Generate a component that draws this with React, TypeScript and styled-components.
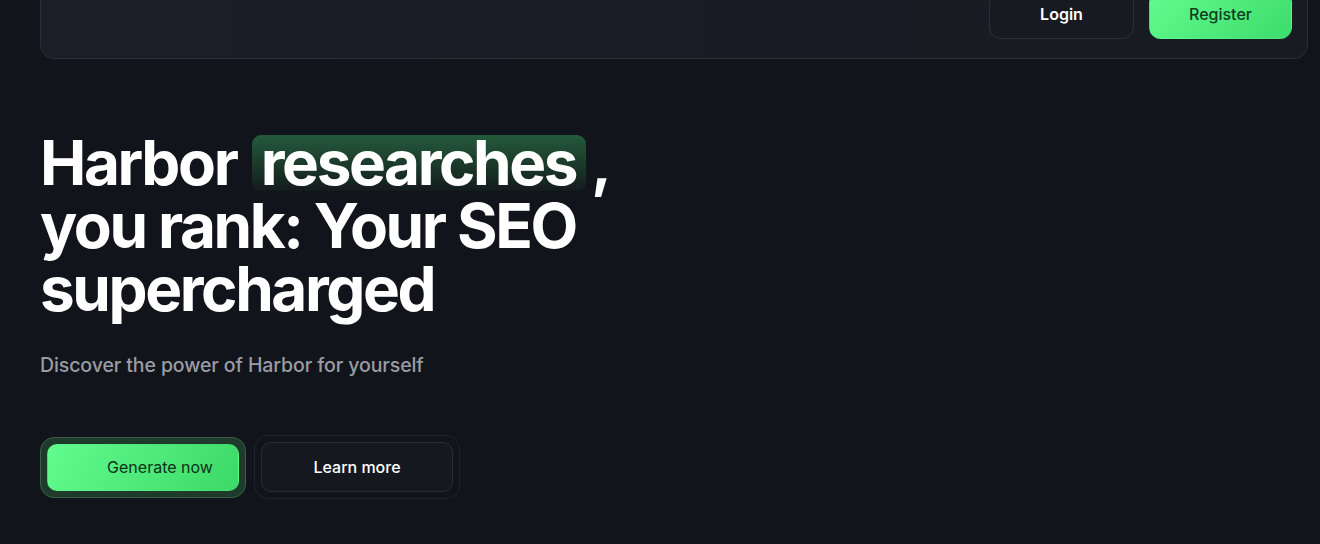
import styled, { createGlobalStyle } from "styled-components";

const GlobalStyle = createGlobalStyle`
html, body {
  margin: 0;
  padding: 0;
  background: #12141b;
  overflow: hidden;
}
body {
  font-family: Inter, "DejaVu Sans", sans-serif;
  color: #fff;
}
`;

const Page = styled.div`
width: 1320px;
height: 544px;
padding: 0 12px 0 40px;
box-sizing: border-box;
background: #12141b;
`;

const NavCard = styled.header`
margin-top: -29px;
height: 88px;
box-sizing: border-box;
display: flex;
justify-content: flex-end;
align-items: flex-end;
gap: 15px;
padding: 0 15px 19px 0;
background: linear-gradient(90deg, #1b1e26, #181b22);
border: 1px solid #2b2e36;
border-radius: 14px;
`;

const NavButton = styled.button<{ $primary?: boolean }>`
width: ${(p) => (p.$primary ? "143px" : "145px")};
height: 48px;
border-radius: 12px;
font-family: Inter, sans-serif;
font-size: 16px;
font-weight: ${(p) => (p.$primary ? 500 : 600)};
color: ${(p) => (p.$primary ? "#0f3d1f" : "#ffffff")};
background: ${(p) =>
  p.$primary ? "linear-gradient(135deg, #62fb8f, #3ddc6b)" : "#171a21"};
border: 1px solid ${(p) => (p.$primary ? "transparent" : "#2d3038")};
padding: 0 0 2px;
`;

const Hero = styled.section`
padding-top: 72px;
`;

const Heading = styled.h1`
margin: 0;
font-size: 62px;
line-height: 63px;
font-weight: 700;
letter-spacing: -2.4px;
color: #ffffff;
`;

const Highlight = styled.span`
display: inline-block;
line-height: 56px;
padding: 0 10px 0 9px;
margin: 0 5px 0 3px;
border-radius: 9px;
background: linear-gradient(180deg, #245a3b 0%, #1a3528 60%, #141b1d 100%);
`;

const Subtitle = styled.p`
margin: 33px 0 0;
font-size: 19.5px;
font-weight: 500;
color: #9a9ca4;
letter-spacing: -0.1px;
`;

const Actions = styled.div`
margin-top: 58px;
display: flex;
gap: 8px;
align-items: center;
`;

const ButtonFrame = styled.div<{ $green?: boolean }>`
padding: 6px;
border-radius: 14px;
border: 1px solid ${(p) => (p.$green ? "#3b5f47" : "#1f2229")};
background: ${(p) => (p.$green ? "#1e3a2a" : "transparent")};
`;

const ActionButton = styled.button<{ $green?: boolean }>`
display: block;
width: 192px;
height: ${(p) => (p.$green ? "47px" : "50px")};
border-radius: 10px;
font-family: Inter, sans-serif;
font-size: 16px;
font-weight: ${(p) => (p.$green ? 400 : 500)};
color: ${(p) => (p.$green ? "#0e3219" : "#ffffff")};
background: ${(p) =>
  p.$green ? "linear-gradient(120deg, #62fb8e, #3bd967)" : "#16181f"};
border: 1px solid ${(p) => (p.$green ? "transparent" : "#2a2d35")};
padding: ${(p) => (p.$green ? "0 0 0 34px" : "0")};
`;

export default function App() {
  return (
    <Page>
      <GlobalStyle />
      <NavCard>
        <NavButton>Login</NavButton>
        <NavButton $primary>Register</NavButton>
      </NavCard>
      <Hero>
        <Heading>
          Harbor <Highlight>researches</Highlight>,
          <br />
          you rank: Your SEO
          <br />
          supercharged
        </Heading>
        <Subtitle>Discover the power of Harbor for yourself</Subtitle>
        <Actions>
          <ButtonFrame $green>
            <ActionButton $green>Generate now</ActionButton>
          </ButtonFrame>
          <ButtonFrame>
            <ActionButton>Learn more</ActionButton>
          </ButtonFrame>
        </Actions>
      </Hero>
    </Page>
  );
}
